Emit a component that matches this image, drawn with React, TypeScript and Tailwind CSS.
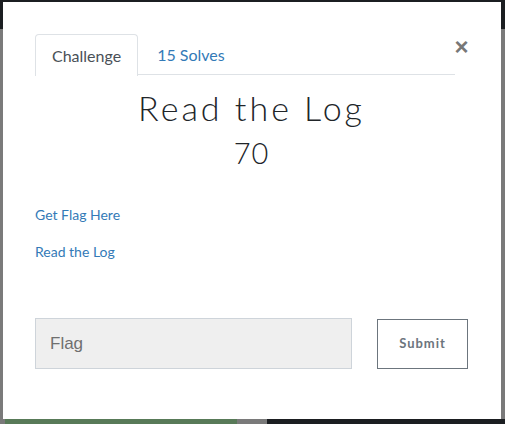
const links = ['Get Flag Here', 'Read the Log']

export default function App() {
  return (
    <div className="relative w-[505px] h-[424px] overflow-hidden bg-[#7a7a7a] font-['Lato','Open_Sans',sans-serif]">
      {/* page behind the dimmed backdrop */}
      <div className="h-[29px] bg-[#1b1e21]" />
      <div className="absolute bottom-0 left-0 right-0 h-[5px] flex">
        <div className="w-[5px] bg-[#7a7a7a]" />
        <div className="w-[232px] bg-[#587a58]" />
        <div className="w-[30px] bg-[#7a7a7a]" />
        <div className="flex-1 bg-[#1b1e21]" />
      </div>

      <div className="absolute left-[3px] top-[2px] w-[498px] h-[417px] bg-white pt-8 pl-8 pr-[33px]">
        <div className="flex items-start">
          <div className="flex-1 flex h-[41px] border-b border-[#dee2e6]">
            <div className="h-[42px] px-4 flex items-center border border-b-0 border-[#dee2e6] rounded-t bg-white text-[16px] text-[#495057]">
              Challenge
            </div>
            <div className="h-[41px] px-[19px] flex items-center text-[16px] text-[#337ab7]">15 Solves</div>
          </div>
          <button className="w-[13px] h-[24px] mt-[1px] flex items-center justify-center text-[24px] leading-none font-bold text-[#777] font-['Liberation_Sans',sans-serif]">
            ×
          </button>
        </div>

        <div className="flex flex-col items-center text-[#212529] mt-[13px]">
          <h3 className="text-[34px] leading-[40px] font-light tracking-[3px]">Read the Log</h3>
          <p className="text-[29px] leading-[40px] font-light tracking-[1px] mt-[5px]">70</p>
        </div>

        <div className="mt-[33px] flex flex-col gap-[19px] text-[14px] leading-[18px] text-[#337ab7]">
          {links.map(l => (
            <a key={l} href="#" className="self-start">{l}</a>
          ))}
        </div>

        <div className="mt-[57px] flex items-center gap-[25px]">
          <input
            placeholder="Flag"
            className="flex-1 h-[51px] px-[14px] bg-[#efefef] border border-[#ced4da] text-[17px] font-['Liberation_Sans',sans-serif] placeholder:text-[#6f6f6f] outline-none"
          />
          <button className="w-[91px] h-[50px] border border-[#6c757d] text-[13px] font-bold tracking-[1px] text-[#6c757d] bg-white">
            Submit
          </button>
        </div>
      </div>
    </div>
  )
}
